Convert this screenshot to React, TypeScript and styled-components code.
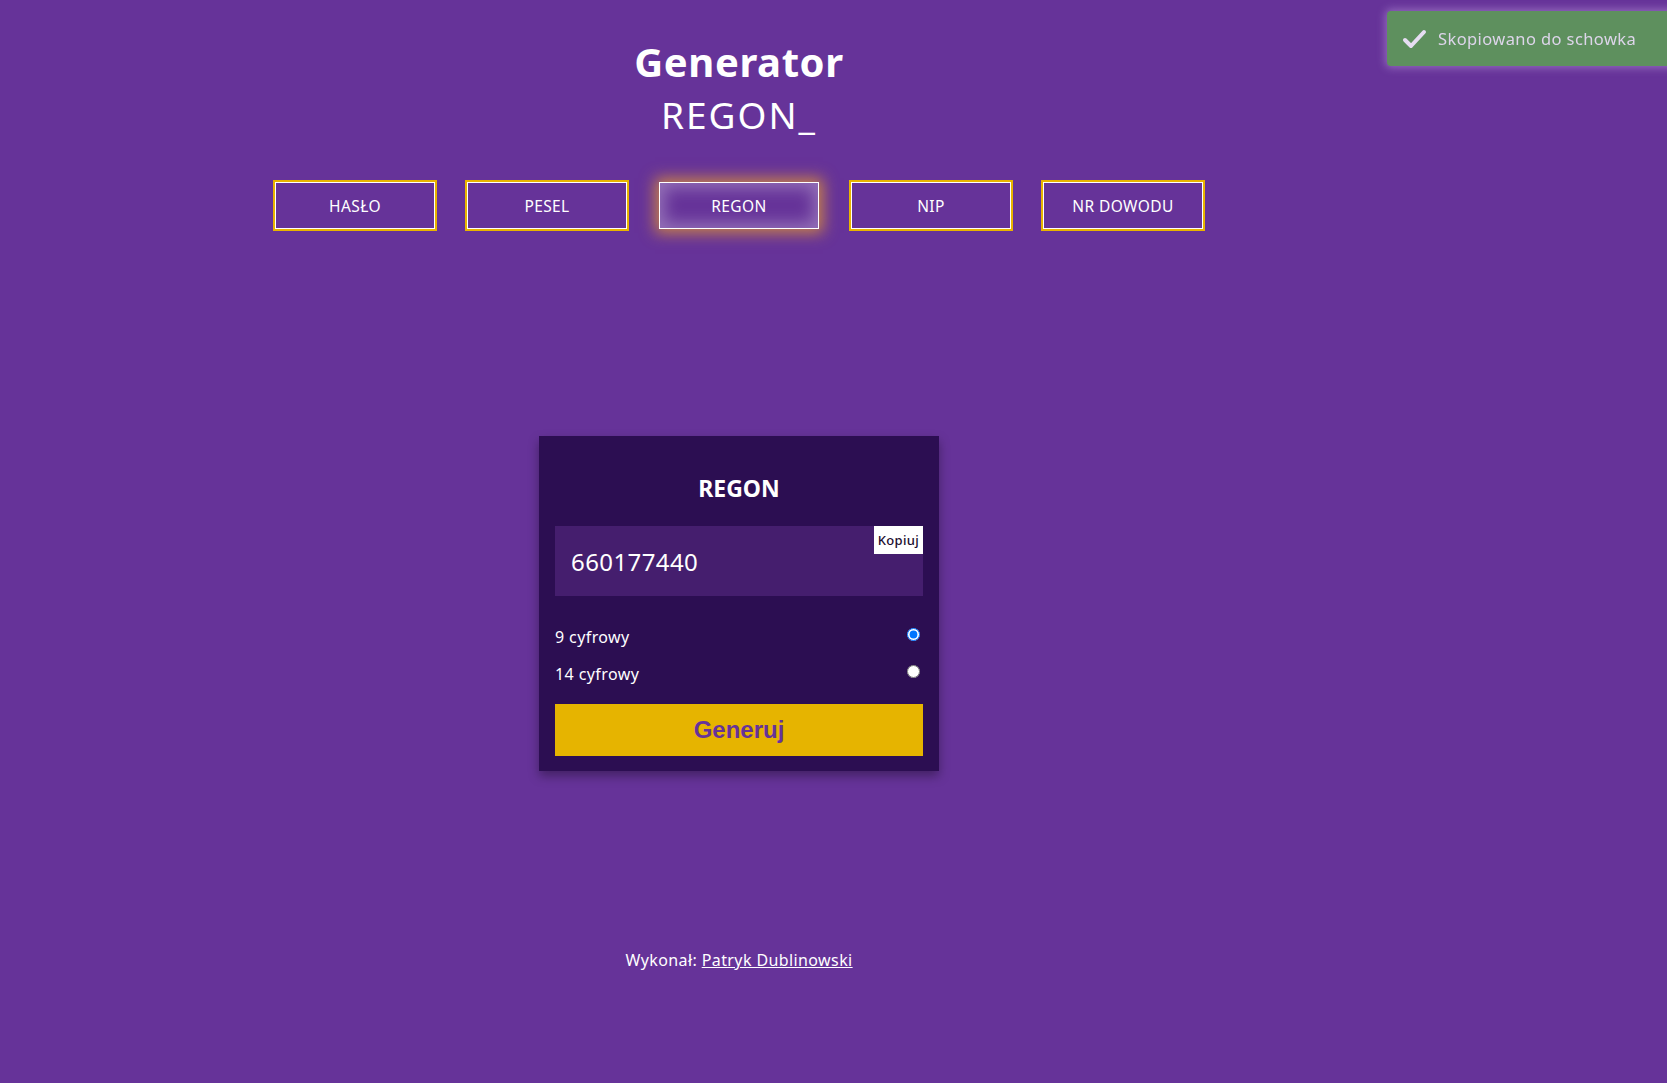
import React from "react";
import styled, { createGlobalStyle } from "styled-components";

const Global = createGlobalStyle`
  html, body { margin: 0; padding: 0; }
  body {
    background: #663399;
    font-family: "Noto Sans", "Open Sans", sans-serif;
    color: #fff;
    min-height: 1083px;
    overflow: hidden;
  }
`;

const Page = styled.div`
  width: 1478px;
  display: flex;
  flex-direction: column;
  align-items: center;
  padding-top: 38px;
`;

const Title = styled.h1`
  margin: 0;
  font-size: 40px;
  line-height: 48px;
  font-weight: 700;
  letter-spacing: 0.6px;
`;

const Subtitle = styled.h2`
  margin: 4px 0 0;
  font-size: 37px;
  line-height: 50px;
  font-weight: 400;
  letter-spacing: 2px;
`;

const Nav = styled.nav`
  display: flex;
  gap: 32px;
  margin-top: 42px;
`;

const NavButton = styled.button<{ $active?: boolean }>`
  width: 160px;
  height: 47px;
  background: #663399;
  color: #fff;
  font-family: "Noto Sans", sans-serif;
  font-size: 15.5px;
  font-weight: 400;
  letter-spacing: 0.4px;
  text-transform: uppercase;
  border: 1px solid #fff;
  cursor: pointer;
  box-shadow: ${(p) =>
    p.$active
      ? "0 0 14px 4px rgba(225, 150, 50, 0.8), inset 0 0 16px 5px rgba(255, 255, 255, 0.3)"
      : "0 0 0 2px #e8b400"};
`;

const Card = styled.section`
  margin-top: 207px;
  width: 400px;
  box-sizing: border-box;
  padding: 0 16px 15px;
  background: #2c0e52;
  box-shadow: 0 5px 10px rgba(0, 0, 0, 0.35);
  display: flex;
  flex-direction: column;
`;

const CardTitle = styled.h3`
  margin: 36px 0 0;
  text-align: center;
  font-size: 23px;
  line-height: 32px;
  font-weight: 700;
`;

const Output = styled.div`
  position: relative;
  margin-top: 22px;
  height: 70px;
  background: #451e6e;
  display: flex;
  align-items: center;
  padding-left: 16px;
  font-size: 24px;
  letter-spacing: 0.4px;
`;

const CopyButton = styled.button`
  position: absolute;
  top: 0;
  right: 0;
  height: 28px;
  padding: 0 4px;
  background: #fff;
  color: #1a0b2e;
  border: none;
  font-family: "Noto Sans", sans-serif;
  font-size: 13px;
  font-weight: 500;
  letter-spacing: 0.3px;
`;

const Options = styled.div`
  margin-top: 29px;
  display: flex;
  flex-direction: column;
  gap: 12px;
`;

const OptionRow = styled.label`
  display: flex;
  align-items: center;
  justify-content: space-between;
  font-size: 16px;
  letter-spacing: 0.4px;
  line-height: 25px;
  height: 25px;
`;

const Radio = styled.input`
  margin: 0 3px 0 0;
  width: 13px;
  height: 13px;
  position: relative;
  top: -3px;
`;

const Generate = styled.button`
  margin-top: 17px;
  height: 52px;
  background: #e6b400;
  border: none;
  color: #663399;
  font-family: "Liberation Sans", Arial, sans-serif;
  font-size: 24px;
  font-weight: 700;
  cursor: pointer;
`;

const Footer = styled.footer`
  margin-top: 178px;
  font-size: 16px;
  letter-spacing: 0.4px;
  line-height: 22px;
`;

const FooterLink = styled.a`
  color: #fff;
  text-decoration: underline;
`;

const Toast = styled.div`
  position: fixed;
  top: 11px;
  left: 1387px;
  width: 300px;
  height: 55px;
  box-sizing: border-box;
  padding-left: 15px;
  display: flex;
  align-items: center;
  gap: 11px;
  background: #5e905e;
  border-radius: 4px;
  box-shadow: 0 0 8px 2px rgba(200, 170, 230, 0.45);
  color: #ddd5ea;
  font-size: 16.5px;
  letter-spacing: 0.4px;
`;

const tabs = ["Hasło", "PESEL", "REGON", "NIP", "Nr dowodu"];

export default function App() {
  return (
    <>
      <Global />
      <Page>
        <Title>Generator</Title>
        <Subtitle>REGON_</Subtitle>
        <Nav>
          {tabs.map((t) => (
            <NavButton key={t} $active={t === "REGON"}>
              {t}
            </NavButton>
          ))}
        </Nav>
        <Card>
          <CardTitle>REGON</CardTitle>
          <Output>
            660177440
            <CopyButton>Kopiuj</CopyButton>
          </Output>
          <Options>
            <OptionRow>
              9 cyfrowy
              <Radio type="radio" name="len" defaultChecked />
            </OptionRow>
            <OptionRow>
              14 cyfrowy
              <Radio type="radio" name="len" />
            </OptionRow>
          </Options>
          <Generate>Generuj</Generate>
        </Card>
        <Footer>
          Wykonał: <FooterLink href="#">Patryk Dublinowski</FooterLink>
        </Footer>
      </Page>
      <Toast>
        <svg width="25" height="20" viewBox="0 0 25 20" fill="none">
          <path
            d="M3 11 L9 17 L22 3"
            stroke="#e6ddf2"
            strokeWidth="4"
            strokeLinecap="round"
            strokeLinejoin="round"
          />
        </svg>
        Skopiowano do schowka
      </Toast>
    </>
  );
}
